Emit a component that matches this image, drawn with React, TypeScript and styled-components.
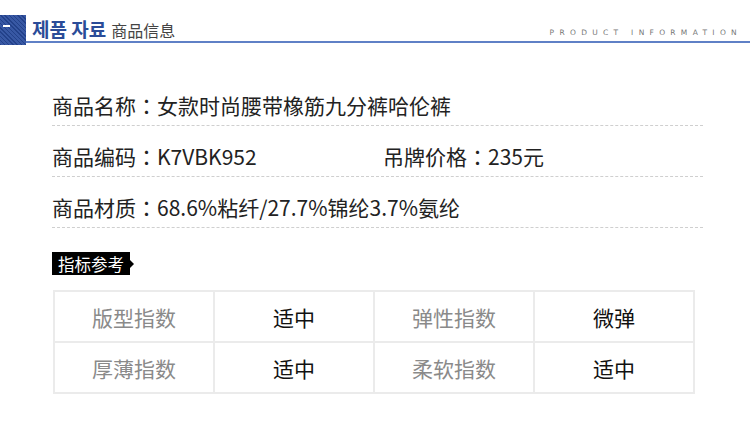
import React from "react";
import styled, { createGlobalStyle } from "styled-components";

const GlobalStyle = createGlobalStyle`
  body {
    margin: 0;
    background: #ffffff;
    font-family: "Noto Sans CJK SC", "Noto Sans", sans-serif;
  }
`;

const infoRows = [
    [{ label: "商品名称", value: "女款时尚腰带橡筋九分裤哈伦裤" }],
    [
        { label: "商品编码", value: "K7VBK952" },
        { label: "吊牌价格", value: "235元" },
    ],
    [{ label: "商品材质", value: "68.6%粘纤/27.7%锦纶3.7%氨纶" }],
];

const indexCells = [
    { text: "版型指数", isLabel: true },
    { text: "适中", isLabel: false },
    { text: "弹性指数", isLabel: true },
    { text: "微弹", isLabel: false },
    { text: "厚薄指数", isLabel: true },
    { text: "适中", isLabel: false },
    { text: "柔软指数", isLabel: true },
    { text: "适中", isLabel: false },
];

function App() {
    return (
        <Page>
            <GlobalStyle />
            <Header>
                <Badge />
                <HeaderBar>
                    <TitleGroup>
                        <KoTitle>제품 자료</KoTitle>
                        <CnTitle>商品信息</CnTitle>
                    </TitleGroup>
                    <EnTitle>PRODUCT INFORMATION</EnTitle>
                </HeaderBar>
            </Header>

            <InfoList>
                {infoRows.map((row, i) => (
                    <InfoRow key={i}>
                        {row.map((item, j) => (
                            <InfoItem key={item.label} wide={row.length > 1 && j === 0}>
                                {item.label}
                                <Colon>：</Colon>
                                {item.value}
                            </InfoItem>
                        ))}
                    </InfoRow>
                ))}
            </InfoList>

            <Tag>指标参考</Tag>

            <IndexTable>
                {indexCells.map((cell, i) => (
                    <Cell key={i} isLabel={cell.isLabel}>
                        {cell.text}
                    </Cell>
                ))}
            </IndexTable>
        </Page>
    );
}

const Page = styled.div`
  width: 750px;
  height: 426px;
  overflow: hidden;
  background: #ffffff;
`;

const Header = styled.div`
  display: flex;
  height: 28px;
  margin-top: 15px;
`;

const Badge = styled.div`
  position: relative;
  width: 26px;
  height: 30px;
  background: repeating-linear-gradient(
    45deg,
    #23418a 0 1px,
    #3858a4 1px 3px
  );

  &::after {
    content: "";
    position: absolute;
    left: 3px;
    top: 10px;
    width: 7px;
    height: 2px;
    background: #ffffff;
  }
`;

const HeaderBar = styled.div`
  flex: 1;
  display: flex;
  align-items: center;
  justify-content: space-between;
  padding: 0 8px 0 6px;
  border-bottom: 2px solid #5f80c6;
`;

const TitleGroup = styled.div`
  display: flex;
  align-items: baseline;
`;

const KoTitle = styled.span`
  font-family: "Noto Sans CJK KR", sans-serif;
  font-size: 19px;
  font-weight: 700;
  color: #2b4c98;
`;

const CnTitle = styled.span`
  margin-left: 5px;
  font-family: "Noto Sans CJK SC", sans-serif;
  font-size: 16px;
  color: #444444;
`;

const EnTitle = styled.span`
  margin-top: 8px;
  font-family: "DejaVu Sans", sans-serif;
  font-size: 7.5px;
  letter-spacing: 5.3px;
  color: #777777;
`;

const InfoList = styled.div`
  margin: 32px 47px 0 52px;
`;

const InfoRow = styled.div`
  display: flex;
  align-items: flex-end;
  height: 51px;
  padding-bottom: 8px;
  box-sizing: border-box;
  border-bottom: 1px dashed #cfcfcf;
`;

const InfoItem = styled.div<{ wide: boolean }>`
  width: ${(props) => (props.wide ? "331px" : "auto")};
  font-size: 21px;
  line-height: 24px;
  color: #222222;
  white-space: nowrap;
`;

const Colon = styled.span`
  font-family: "Noto Sans CJK TC", sans-serif;
`;

const Tag = styled.div`
  position: relative;
  display: flex;
  align-items: center;
  width: fit-content;
  margin: 24px 0 0 52px;
  padding: 0 6px;
  height: 23px;
  background: #000000;
  color: #ffffff;
  font-size: 16.5px;

  &::after {
    content: "";
    position: absolute;
    right: -4px;
    top: 8px;
    border-left: 4px solid #000000;
    border-top: 4px solid transparent;
    border-bottom: 4px solid transparent;
  }
`;

const IndexTable = styled.div`
  display: grid;
  grid-template-columns: repeat(4, 1fr);
  gap: 2px;
  width: 642px;
  margin: 15px 0 0 53px;
  padding: 2px;
  box-sizing: border-box;
  background: #ebebeb;
`;

const Cell = styled.div<{ isLabel: boolean }>`
  height: 49px;
  display: flex;
  align-items: center;
  justify-content: center;
  background: #ffffff;
  font-size: 21px;
  color: ${(props) => (props.isLabel ? "#8a8a8a" : "#111111")};
`;

export default App;
